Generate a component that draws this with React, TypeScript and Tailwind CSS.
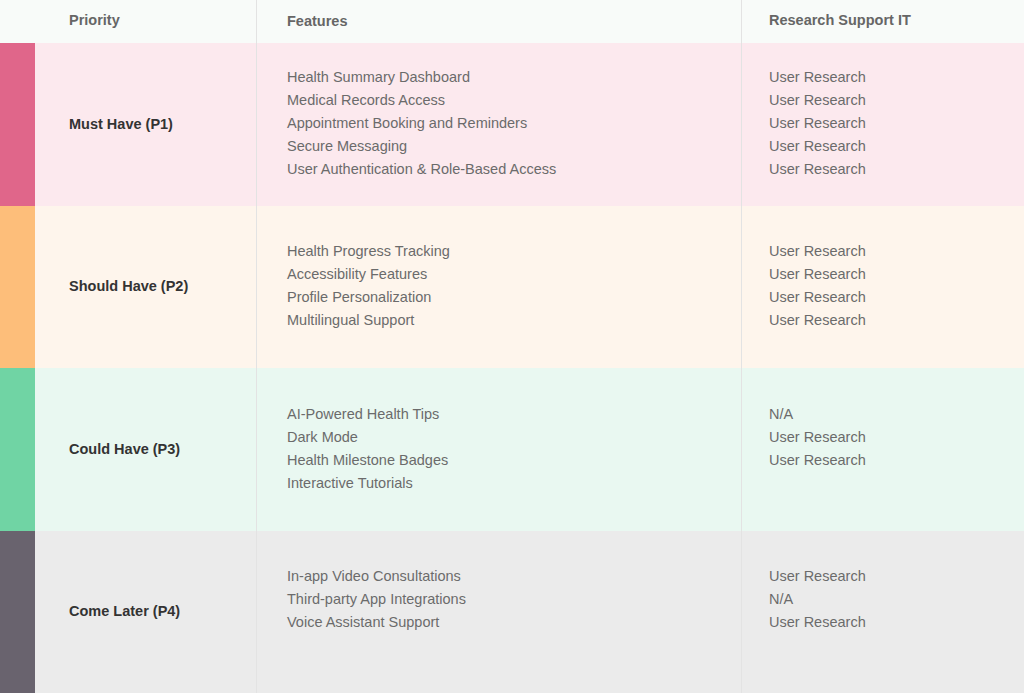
import React from 'react';

interface Row {
  label: string;
  stripe: string;
  bg: string;
  features: string[];
  support: string[];
}

const rows: Row[] = [
  {
    label: 'Must Have (P1)',
    stripe: 'bg-[#e0668a]',
    bg: 'bg-[#fce9ee]',
    features: [
      'Health Summary Dashboard',
      'Medical Records Access',
      'Appointment Booking and Reminders',
      'Secure Messaging',
      'User Authentication & Role-Based Access',
    ],
    support: ['User Research', 'User Research', 'User Research', 'User Research', 'User Research'],
  },
  {
    label: 'Should Have (P2)',
    stripe: 'bg-[#fdbe7a]',
    bg: 'bg-[#fef5ec]',
    features: ['Health Progress Tracking', 'Accessibility Features', 'Profile Personalization', 'Multilingual Support'],
    support: ['User Research', 'User Research', 'User Research', 'User Research'],
  },
  {
    label: 'Could Have (P3)',
    stripe: 'bg-[#70d4a4]',
    bg: 'bg-[#e9f8f1]',
    features: ['AI-Powered Health Tips', 'Dark Mode', 'Health Milestone Badges', 'Interactive Tutorials'],
    support: ['N/A', 'User Research', 'User Research'],
  },
  {
    label: 'Come Later (P4)',
    stripe: 'bg-[#69636e]',
    bg: 'bg-[#ebebeb]',
    features: ['In-app Video Consultations', 'Third-party App Integrations', 'Voice Assistant Support'],
    support: ['User Research', 'N/A', 'User Research'],
  },
];

function List({ items }: { items: string[] }) {
  return (
    <ul className="min-h-[92px] -mt-[1px]">
      {items.map((item, i) => (
        <li key={i} className="h-[23px] leading-[23px] text-[14.5px] text-[#6b6b6b]">
          {item}
        </li>
      ))}
    </ul>
  );
}

export default function App() {
  return (
    <div
      className="w-[1024px] h-[693px] overflow-hidden bg-white"
      style={{ fontFamily: '"Liberation Sans", Arial, sans-serif' }}
    >
      {/* header */}
      <div className="flex h-[43px] bg-[#f8fbf9] text-[14.5px] font-bold text-[#666666]">
        <div className="w-[35px]" />
        <div className="w-[221px] pl-[34px] pt-[10px]">Priority</div>
        <div className="w-[485px] border-l border-[#e3e3e3] pl-[30px] pt-[11px]">Features</div>
        <div className="flex-1 border-l border-[#e3e3e3] pl-[27px] pt-[10px]">Research Support IT</div>
      </div>

      {rows.map((row) => (
        <div key={row.label} className={`flex h-[162.5px] ${row.bg}`}>
          <div className={`w-[35px] ${row.stripe}`} />
          <div className="w-[221px] pl-[34px] pt-[1px] flex items-center text-[14.5px] font-bold text-[#333333]">
            {row.label}
          </div>
          <div className="w-[485px] border-l border-[#e3e3e3] pl-[30px] flex items-center">
            <List items={row.features} />
          </div>
          <div className="flex-1 border-l border-[#e3e3e3] pl-[27px] flex items-center">
            <List items={row.support} />
          </div>
        </div>
      ))}
    </div>
  );
}
